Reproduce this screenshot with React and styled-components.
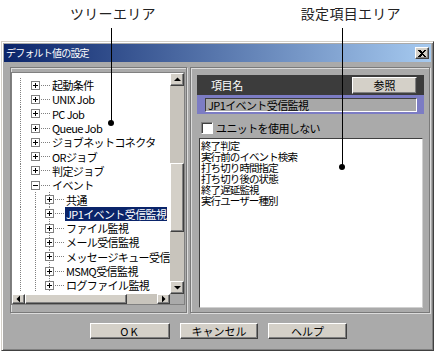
import styled, { createGlobalStyle } from "styled-components";

const FONT = `"Noto Sans CJK JP", "Noto Sans", sans-serif`;

const GlobalStyle = createGlobalStyle`
  html, body {
    margin: 0;
    padding: 0;
    background: #fff;
  }
  body {
    font-family: ${FONT};
  }
`;

const treeItems = [
  { level: 1, label: "起動条件" },
  { level: 1, label: "UNIX Job" },
  { level: 1, label: "PC Job" },
  { level: 1, label: "Queue Job" },
  { level: 1, label: "ジョブネットコネクタ" },
  { level: 1, label: "ORジョブ" },
  { level: 1, label: "判定ジョブ" },
  { level: 1, label: "イベント", open: true },
  { level: 2, label: "共通" },
  { level: 2, label: "JP1イベント受信監視", selected: true },
  { level: 2, label: "ファイル監視" },
  { level: 2, label: "メール受信監視" },
  { level: 2, label: "メッセージキュー受信監視" },
  { level: 2, label: "MSMQ受信監視" },
  { level: 2, label: "ログファイル監視" },
];

const settingItems = [
  "終了判定",
  "実行前のイベント検索",
  "打ち切り時間指定",
  "打ち切り後の状態",
  "終了遅延監視",
  "実行ユーザー種別",
];

function Expander({ open }) {
  return (
    <svg width="9" height="9" viewBox="0 0 9 9" shapeRendering="crispEdges">
      <rect x="0.5" y="0.5" width="8" height="8" fill="#fff" stroke="#808080" />
      <path d="M2 4.5h5" stroke="#000" />
      {!open && <path d="M4.5 2v5" stroke="#000" />}
    </svg>
  );
}

function Arrow({ dir }) {
  const d = {
    up: "M1 5h7L4.5 1.5z",
    down: "M1 2h7L4.5 5.5z",
    left: "M5 0.5v7L1.5 4z",
    right: "M2 0.5v7L5.5 4z",
  }[dir];
  const vertical = dir === "up" || dir === "down";
  return (
    <svg width={vertical ? 9 : 7} height={vertical ? 7 : 8} viewBox={vertical ? "0 0 9 7" : "0 0 7 8"}>
      <path d={d} fill="#000" />
    </svg>
  );
}

export default function App() {
  return (
    <Page>
      <GlobalStyle />
      <TopBar>
        <Caption $left={70}>ツリーエリア</Caption>
        <Caption $left={145}>設定項目エリア</Caption>
      </TopBar>

      <Dialog>
        <TitleBar>
          <TitleText>デフォルト値の設定</TitleText>
          <CloseButton>
            <svg width="8" height="7" viewBox="0 0 8 7" shapeRendering="crispEdges">
              <path d="M0 0h2l2 2 2-2h2L5 3.5 8 7H6L4 5 2 7H0l3-3.5z" fill="#000" />
            </svg>
          </CloseButton>
        </TitleBar>

        <Body>
          <Panels>
            <LeftPanel>
              <TreeView>
                <TreeContent>
                  {treeItems.map((item) => (
                    <TreeRow key={item.label} $level={item.level}>
                      <Guide $left={8} />
                      {item.level === 2 && <Guide $left={23} />}
                      {item.level === 2 && <Guide $left={37} />}
                      <Expander open={item.open} />
                      <Connector />
                      <TreeLabel $selected={item.selected}>{item.label}</TreeLabel>
                    </TreeRow>
                  ))}
                </TreeContent>

                <VScroll>
                  <ScrollButton $h={13}>
                    <Arrow dir="up" />
                  </ScrollButton>
                  <VTrack>
                    <VThumb />
                  </VTrack>
                  <ScrollButton $h={13}>
                    <Arrow dir="down" />
                  </ScrollButton>
                </VScroll>

                <HScroll>
                  <ScrollButton $w={13}>
                    <Arrow dir="left" />
                  </ScrollButton>
                  <HThumb />
                  <HTrack />
                  <ScrollButton $w={13}>
                    <Arrow dir="right" />
                  </ScrollButton>
                </HScroll>
                <Corner />
              </TreeView>
            </LeftPanel>

            <RightPanel>
              <HeaderBox>
                <HeaderLabel>項目名</HeaderLabel>
                <Button $w={65} $h={17}>参照</Button>
              </HeaderBox>
              <NameBar>
                <NameField>JP1イベント受信監視</NameField>
              </NameBar>
              <CheckRow>
                <CheckBox />
                <CheckLabel>ユニットを使用しない</CheckLabel>
              </CheckRow>
              <ItemList>
                {settingItems.map((s) => (
                  <ListItem key={s}>{s}</ListItem>
                ))}
              </ItemList>
            </RightPanel>
          </Panels>

          <ButtonRow>
            <Button $w={80} $spacing={2}>OK</Button>
            <Button $w={78}>キャンセル</Button>
            <Button $w={79}>ヘルプ</Button>
          </ButtonRow>
        </Body>
      </Dialog>

      <Leader $x={111} $top={28} $bottom={123} />
      <Leader $x={342} $top={28} $bottom={167} />
    </Page>
  );
}

const Page = styled.div`
  position: relative;
  width: 436px;
  height: 354px;
  overflow: hidden;
  background: #fff;
`;

const TopBar = styled.div`
  height: 41px;
  display: flex;
  align-items: flex-start;
  padding-top: 6px;
  box-sizing: border-box;
`;

const Caption = styled.span`
  margin-left: ${(p) => p.$left}px;
  font-size: 14px;
  line-height: 15px;
  letter-spacing: 0.3px;
  color: #222;
`;

const Dialog = styled.div`
  margin-left: 1px;
  width: 433px;
  height: 310px;
  box-sizing: border-box;
  display: flex;
  flex-direction: column;
  padding: 2px;
  background: #aaa;
  border: 1px solid;
  border-color: #d4d0c8 #404040 #404040 #d4d0c8;
  box-shadow: inset 1px 1px 0 #fff, inset -1px -1px 0 #808080;
`;

const TitleBar = styled.div`
  height: 18px;
  flex-shrink: 0;
  display: flex;
  align-items: center;
  justify-content: space-between;
  padding: 0 2px 0 2px;
  background: linear-gradient(90deg, #0a246a, #a6caf0);
`;

const TitleText = styled.span`
  color: #fff;
  font-size: 10px;
  letter-spacing: -0.8px;
  line-height: 12px;
`;

const CloseButton = styled.div`
  width: 14px;
  height: 12px;
  box-sizing: border-box;
  display: flex;
  align-items: center;
  justify-content: center;
  background: #d4d0c8;
  border: 1px solid;
  border-color: #fff #404040 #404040 #fff;
  box-shadow: inset -1px -1px 0 #808080;
`;

const Body = styled.div`
  flex: 1;
  display: flex;
  flex-direction: column;
  padding: 5px 1px 0 6px;
`;

const Panels = styled.div`
  display: flex;
  gap: 3px;
  height: 246px;
`;

const etched = `
  box-sizing: border-box;
  border: 1px solid #7a7a7a;
  box-shadow: inset 1px 1px 0 #dcdcdc, 1px 1px 0 #dcdcdc;
`;

const LeftPanel = styled.div`
  ${etched}
  width: 177px;
  padding: 4px 1px 7px 0;
  display: flex;
`;

const TreeView = styled.div`
  flex: 1;
  display: grid;
  grid-template-columns: 1fr 14px;
  grid-template-rows: 1fr 10px;
  border: 1px solid #808080;
  background: #fff;
`;

const TreeContent = styled.div`
  position: relative;
  overflow: hidden;
  padding-top: 5px;
  font-size: 11px;
  letter-spacing: -0.6px;
  color: #000;
`;

const TreeRow = styled.div`
  position: relative;
  height: 14.3px;
  display: flex;
  align-items: center;
  padding-left: ${(p) => (p.$level === 2 ? 33 : 19)}px;
  white-space: nowrap;

  svg {
    position: relative;
    flex-shrink: 0;
  }
`;

const Guide = styled.span`
  position: absolute;
  top: 0;
  bottom: 0;
  left: ${(p) => p.$left}px;
  width: 1px;
  background: repeating-linear-gradient(#808080 0 1px, transparent 1px 2px);
`;

const Connector = styled.span`
  flex-shrink: 0;
  width: 9px;
  height: 1px;
  margin: 0 2px 0 1px;
  background: repeating-linear-gradient(90deg, #808080 0 1px, transparent 1px 2px);
`;

const TreeLabel = styled.span`
  line-height: 14px;
  padding: 0 1px;
  margin-left: -1px;
  background: ${(p) => (p.$selected ? "#0a246a" : "transparent")};
  color: ${(p) => (p.$selected ? "#fff" : "#000")};
`;

const ScrollButton = styled.div`
  flex-shrink: 0;
  width: ${(p) => (p.$w ? `${p.$w}px` : "auto")};
  height: ${(p) => (p.$h ? `${p.$h}px` : "auto")};
  box-sizing: border-box;
  display: flex;
  align-items: center;
  justify-content: center;
  background: #d4d0c8;
  border: 1px solid;
  border-color: #fff #404040 #404040 #fff;
  box-shadow: inset -1px -1px 0 #808080;
`;

const VScroll = styled.div`
  display: flex;
  flex-direction: column;
  background: #cdc9c1;
`;

const VTrack = styled.div`
  flex: 1;
  background: #c8c4bc;
`;

const VThumb = styled.div`
  margin-top: 77px;
  height: 69px;
  box-sizing: border-box;
  background: #d4d0c8;
  border: 1px solid;
  border-color: #fff #404040 #404040 #fff;
  box-shadow: inset -1px -1px 0 #808080;
`;

const HScroll = styled.div`
  display: flex;
  background: #c8c4bc;
`;

const HThumb = styled.div`
  width: 102px;
  box-sizing: border-box;
  background: #d4d0c8;
  border: 1px solid;
  border-color: #fff #404040 #404040 #fff;
  box-shadow: inset -1px -1px 0 #808080;
`;

const HTrack = styled.div`
  flex: 1;
`;

const Corner = styled.div`
  background: #aaa;
`;

const RightPanel = styled.div`
  ${etched}
  flex: 1;
  display: flex;
  flex-direction: column;
  padding: 7px 5px 4px 6px;
`;

const HeaderBox = styled.div`
  height: 20px;
  flex-shrink: 0;
  display: flex;
  align-items: center;
  justify-content: space-between;
  padding: 0 7px 0 14px;
  background: #3c3c3c;
`;

const HeaderLabel = styled.span`
  color: #fff;
  font-size: 11px;
  letter-spacing: -0.4px;
`;

const Button = styled.button`
  width: ${(p) => p.$w}px;
  height: ${(p) => p.$h || 16}px;
  padding: 0;
  box-sizing: border-box;
  font-family: ${FONT};
  font-size: 11px;
  line-height: 12px;
  letter-spacing: ${(p) => p.$spacing || 0}px;
  color: #000;
  background: #d4d0c8;
  border: 1px solid;
  border-color: #fff #404040 #404040 #fff;
  box-shadow: inset -1px -1px 0 #808080;
`;

const NameBar = styled.div`
  height: 19px;
  flex-shrink: 0;
  box-sizing: border-box;
  padding: 3px 7px 2px 8px;
  background: #7c7cc4;
`;

const NameField = styled.div`
  height: 14px;
  box-sizing: border-box;
  padding-left: 2px;
  background: #a8a8a8;
  border: 1px solid;
  border-color: #404040 #fff #fff #404040;
  font-size: 11px;
  line-height: 12px;
  letter-spacing: -0.6px;
  color: #000;
`;

const CheckRow = styled.div`
  display: flex;
  align-items: center;
  gap: 3px;
  height: 12px;
  margin: 8px 0 0 4px;
`;

const CheckBox = styled.span`
  width: 12px;
  height: 12px;
  box-sizing: border-box;
  background: #fff;
  border: 1px solid;
  border-color: #808080 #fff #fff #808080;
  box-shadow: inset 1px 1px 0 #404040;
`;

const CheckLabel = styled.span`
  font-size: 11px;
  letter-spacing: -0.6px;
  line-height: 12px;
  color: #000;
`;

const ItemList = styled.div`
  flex: 1;
  margin: 4px 1px 0 2px;
  padding: 1px 1px;
  background: #fff;
  border: 1px solid;
  border-color: #404040 #d0d0d0 #d0d0d0 #404040;
`;

const ListItem = styled.div`
  font-size: 10.5px;
  line-height: 11px;
  letter-spacing: -0.9px;
  color: #000;
  white-space: nowrap;
`;

const ButtonRow = styled.div`
  display: flex;
  justify-content: center;
  gap: 10px;
  margin-top: 10px;
  padding-right: 3px;
`;

const Leader = styled.div`
  position: absolute;
  left: ${(p) => p.$x}px;
  top: ${(p) => p.$top}px;
  width: 1px;
  height: ${(p) => p.$bottom - p.$top}px;
  background: #000;

  &::after {
    content: "";
    position: absolute;
    left: -3px;
    bottom: -3px;
    width: 6px;
    height: 6px;
    border-radius: 50%;
    background: #000;
  }
`;
